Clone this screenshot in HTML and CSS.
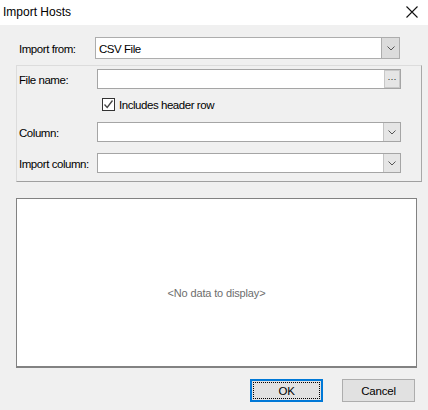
FILE: index.html
```html
<!DOCTYPE html>
<html>
<head>
<meta charset="utf-8">
<link rel="stylesheet" href="styles.css">
</head>
<body>
<div class="dialog">
  <div class="titlebar">
    <span class="title">Import Hosts</span>
    <svg class="close" width="12" height="12" viewBox="0 0 12 12"><path d="M0.5 0.5L11.5 11.5M11.5 0.5L0.5 11.5" stroke="#111" stroke-width="1.1" fill="none"/></svg>
  </div>
  <div class="content">
    <div class="row first">
      <span class="label">Import from:</span>
      <div class="combo big">
        <span class="value">CSV File</span>
        <span class="dd"><svg width="8" height="5" viewBox="0 0 8 5"><path d="M0.5 0.5L4 4L7.5 0.5" stroke="#555" fill="none"/></svg></span>
      </div>
    </div>
    <div class="panel">
      <div class="row">
        <span class="label">File name:</span>
        <div class="combo text">
          <span class="value"></span>
          <span class="browse">···</span>
        </div>
      </div>
      <div class="checkrow">
        <span class="check"><svg width="11" height="11" viewBox="0 0 11 11"><path d="M1.5 5.5L4.2 8.5L9.5 1.5" stroke="#444" stroke-width="1.3" fill="none"/></svg></span>
        <span class="checklabel">Includes header row</span>
      </div>
      <div class="row r-col">
        <span class="label">Column:</span>
        <div class="combo">
          <span class="value"></span>
          <span class="dd"><svg width="8" height="5" viewBox="0 0 8 5"><path d="M0.5 0.5L4 4L7.5 0.5" stroke="#555" fill="none"/></svg></span>
        </div>
      </div>
      <div class="row r-imp">
        <span class="label">Import column:</span>
        <div class="combo">
          <span class="value"></span>
          <span class="dd"><svg width="8" height="5" viewBox="0 0 8 5"><path d="M0.5 0.5L4 4L7.5 0.5" stroke="#555" fill="none"/></svg></span>
        </div>
      </div>
    </div>
    <div class="grid">
      <span class="empty">&lt;No data to display&gt;</span>
    </div>
    <div class="buttons">
      <button class="btn ok"><span class="focus">OK</span></button>
      <button class="btn">Cancel</button>
    </div>
  </div>
</div>
</body>
</html>
```

FILE: styles.css
```css
html, body {
  margin: 0;
  padding: 0;
}
body {
  width: 428px;
  height: 410px;
  background: #f0f0f0;
  font-family: "Liberation Sans", Arial, sans-serif;
  font-size: 11.5px;
  letter-spacing: -0.45px;
  color: #000;
  overflow: hidden;
}
.dialog {
  display: flex;
  flex-direction: column;
  height: 410px;
}
.titlebar {
  height: 25px;
  background: #fff;
  display: flex;
  align-items: center;
  justify-content: space-between;
  padding: 0 10px 0 3px;
  flex: none;
}
.title {
  font-family: "Liberation Sans", Arial, sans-serif;
  font-size: 12px;
  letter-spacing: 0;
  color: #000;
  margin-top: -2px;
}
.close {
  margin-top: -1px;
}
.content {
  display: flex;
  flex-direction: column;
  padding: 12px 0 0 16px;
}
.row {
  display: flex;
  align-items: center;
}
.row.first {
  padding-left: 3px;
}
.label {
  width: 76px;
  flex: none;
  padding-top: 1px;
}
.panel .label {
  width: 78px;
}
.combo {
  width: 302px;
  height: 18px;
  border: 1px solid #a5a5a5;
  background: #fff;
  display: flex;
  align-items: stretch;
  justify-content: space-between;
}
.combo.big {
  width: 303px;
  height: 20px;
  border-color: #adadad;
}
.value {
  padding-left: 3px;
  display: flex;
  align-items: center;
  padding-top: 1px;
}
.dd {
  width: 16px;
  background: #e5e5e5;
  border-left: 1px solid #c4c4c4;
  display: flex;
  align-items: center;
  justify-content: center;
}
.combo.big .dd {
  width: 17px;
  background: #dcdcdc;
  border-left: 1px solid #adadad;
}
.browse {
  width: 14px;
  margin: 0;
  background: #e5e5e5;
  border: 1px solid #c8c8c8;
  display: flex;
  align-items: center;
  justify-content: center;
  font-size: 9px;
  letter-spacing: 0;
  line-height: 1;
  color: #222;
}
.panel {
  margin-top: 6px;
  width: 402px;
  height: 112px;
  border: 1px solid #dcdcdc;
  border-right-color: #a8a8a8;
  border-bottom-color: #a0a0a0;
  padding: 3px 0 0 2px;
  box-sizing: content-box;
  display: flex;
  flex-direction: column;
}
.checkrow {
  display: flex;
  align-items: center;
  margin: 9px 0 0 83px;
  height: 13px;
}
.check {
  width: 11px;
  height: 11px;
  border: 1px solid #333;
  background: #fff;
  display: flex;
  align-items: center;
  justify-content: center;
}
.checklabel {
  margin-left: 4px;
  padding-top: 1px;
}
.r-col {
  margin-top: 11px;
}
.r-imp {
  margin-top: 11px;
}
.grid {
  margin-top: 16px;
  width: 399px;
  height: 167px;
  border: 1px solid #828282;
  border-bottom-width: 2px;
  background: #fff;
  display: flex;
  align-items: center;
  justify-content: center;
}
.empty {
  color: #6d6d6d;
  font-size: 11px;
  letter-spacing: -0.15px;
  margin-top: 21px;
}
.buttons {
  display: flex;
  justify-content: flex-end;
  gap: 19px;
  padding-right: 13px;
  margin-top: 11px;
}
.btn {
  width: 73px;
  height: 23px;
  background: #e1e1e1;
  border: 1px solid #adadad;
  font-family: "Liberation Sans", Arial, sans-serif;
  font-size: 11.5px;
  letter-spacing: -0.2px;
  color: #000;
  padding: 0;
  margin: 0;
  display: flex;
  align-items: center;
  justify-content: center;
}
.btn.ok {
  border: 2px solid #0078d7;
  padding: 1px;
}
.focus {
  flex: 1;
  align-self: stretch;
  border: 1px dotted #000;
  display: flex;
  align-items: center;
  justify-content: center;
}
```
